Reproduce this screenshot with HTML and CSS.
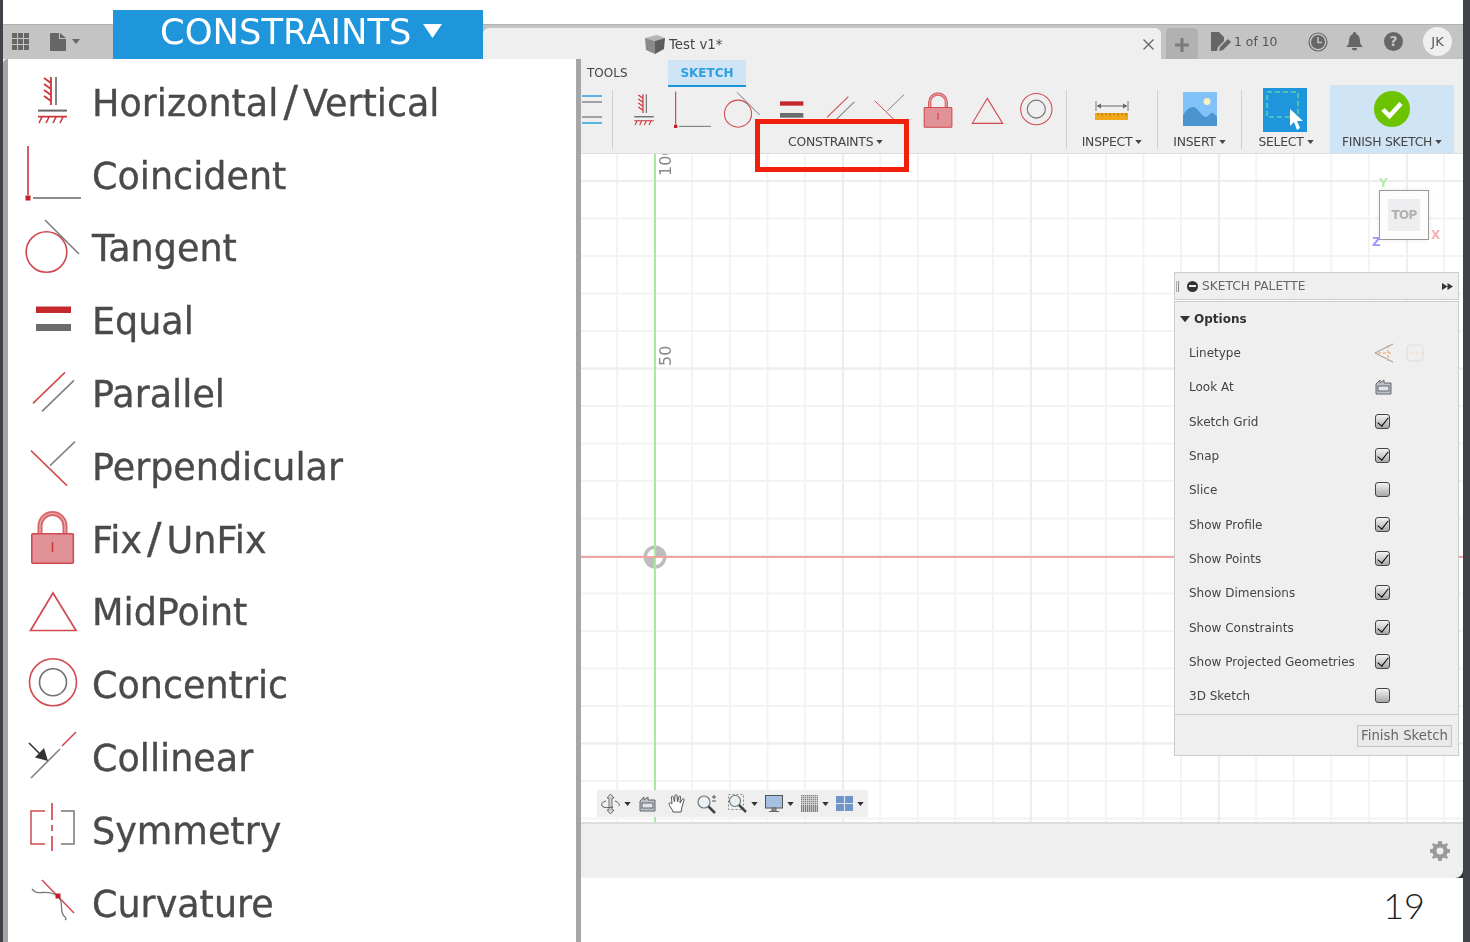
FILE: index.html
```html
<!DOCTYPE html>
<html lang="en">
<head>
    <meta charset="UTF-8">
    <title>Sketch constraints</title>
    <link rel="stylesheet" href="styles.css">
</head>
<body>
    <svg class="defs" width="0" height="0">
        <symbol id="i-hv" viewBox="0 0 60 60">
            <path d="M32 5V33" stroke="#666" stroke-width="1.6" fill="none"/>
            <path d="M20 6l7 5M20 12l7 5M20 18l7 5M20 24l7 5M27 5v28" stroke="#c9353a" stroke-width="1.8" fill="none"/>
            <path d="M14 38.6H43" stroke="#666" stroke-width="2" fill="none"/>
            <path d="M14 44.6H43M18 45l-3 6M25 45l-3 6M32 45l-3 6M39 45l-3 6" stroke="#c9353a" stroke-width="1.6" fill="none"/>
        </symbol>
        <symbol id="i-coincident" viewBox="0 0 60 60">
            <path d="M4 1V50" stroke="#c9353a" stroke-width="1.6" fill="none"/>
            <rect x="1.5" y="50.5" width="5" height="5" fill="#c41f24"/>
            <path d="M9 53H57" stroke="#666" stroke-width="1.4" fill="none"/>
        </symbol>
        <symbol id="i-tangent" viewBox="0 0 60 60">
            <circle cx="22.5" cy="34" r="20.3" stroke="#d04a50" stroke-width="1.6" fill="none"/>
            <path d="M21 2L55 36" stroke="#777" stroke-width="1.5" fill="none"/>
        </symbol>
        <symbol id="i-equal" viewBox="0 0 60 60">
            <rect x="12" y="15.5" width="35" height="6.5" fill="#c4282c"/>
            <rect x="12" y="33" width="35" height="7" fill="#6c6c6c"/>
        </symbol>
        <symbol id="i-parallel" viewBox="0 0 60 60">
            <path d="M9 39.4L41 8.4" stroke="#d04a50" stroke-width="1.6" fill="none"/>
            <path d="M18 47.4L50 16.4" stroke="#808080" stroke-width="1.6" fill="none"/>
        </symbol>
        <symbol id="i-perp" viewBox="0 0 60 60">
            <path d="M7 14.6L43 49.6" stroke="#d04a50" stroke-width="1.5" fill="none"/>
            <path d="M26 29.6L51 5.6" stroke="#808080" stroke-width="1.5" fill="none"/>
        </symbol>
        <symbol id="i-lock" viewBox="0 0 60 60">
            <path d="M16 25V17a12.5 12.5 0 0 1 25 0V25" stroke="#d6666c" stroke-width="5" fill="none"/>
            <path d="M16 25V17a12.5 12.5 0 0 1 25 0V25" stroke="#eeb4b6" stroke-width="1.2" fill="none"/>
            <rect x="7.8" y="24.8" width="41.5" height="29.5" rx="1" fill="#e19296" stroke="#d04a50" stroke-width="1.6"/>
            <path d="M28.5 33V43" stroke="#c9353a" stroke-width="1.5" fill="none"/>
        </symbol>
        <symbol id="i-mid" viewBox="0 0 60 60">
            <path d="M29 11L6.500 48.500H52Z" stroke="#d04a50" stroke-width="1.7" fill="none"/>
        </symbol>
        <symbol id="i-concentric" viewBox="0 0 60 60">
            <circle cx="29" cy="27.200" r="23.500" stroke="#d04a50" stroke-width="1.6" fill="none"/>
            <circle cx="29" cy="27.200" r="13.500" stroke="#707070" stroke-width="1.6" fill="none"/>
        </symbol>
        <symbol id="i-collinear" viewBox="0 0 60 60">
            <path d="M7 50L36 21" stroke="#808080" stroke-width="1.6" fill="none"/>
            <path d="M38 18L52 4" stroke="#d04a50" stroke-width="1.6" fill="none"/>
            <path d="M5 15L16 26" stroke="#333" stroke-width="1.6" fill="none"/>
            <path d="M24 33L11 29.500L20 20Z" fill="#333"/>
        </symbol>
        <symbol id="i-symmetry" viewBox="0 0 60 60">
            <path d="M21 11H7V44H21" stroke="#d04a50" stroke-width="1.5" fill="none"/>
            <path d="M37 11H50V44H37" stroke="#777" stroke-width="1.5" fill="none"/>
            <path d="M28 3V20M28 25V31M28 36V51" stroke="#c9353a" stroke-width="1.5" fill="none"/>
        </symbol>
        <symbol id="i-curvature" viewBox="0 0 60 60">
            <path d="M18 7L50 40" stroke="#d04a50" stroke-width="1.5" fill="none"/>
            <path d="M8 16C14 24 22 15 34 23C41 30 34 39 41 44Q43 46 41 47" stroke="#777" stroke-width="1.3" fill="none"/>
            <rect x="31.500" y="20.500" width="5" height="5" fill="#c41f24"/>
        </symbol>
        <symbol id="i-caret" viewBox="0 0 8 5">
            <path d="M0 0H8L4 5Z" fill="currentColor"/>
        </symbol>
    </svg>

    <div class="page">
        <div class="edge edge-left"></div>
        <div class="main">
            <div class="top-gap"></div>

            <div class="titlebar">
                <div class="bar-left">
                    <svg class="app-grid" width="17" height="17" viewBox="0 0 17 17"><path d="M0 0h5v5H0zM6 0h5v5H6zM12 0h5v5h-5zM0 6h5v5H0zM6 6h5v5H6zM12 6h5v5h-5zM0 12h5v5H0zM6 12h5v5H6zM12 12h5v5h-5z" fill="#666"/></svg>
                    <svg class="file-ico" width="16" height="18" viewBox="0 0 16 18"><path d="M0 1Q0 0 1 0H9V6H16V17Q16 18 15 18H1Q0 18 0 17ZM10 0L16 5H10Z" fill="#666"/></svg>
                    <svg class="bar-caret" width="8" height="5"><use href="#i-caret"/></svg>
                </div>
                <div class="doc-tab">
                    <div class="doc-title">
                        <svg width="20" height="19" viewBox="0 0 20 19"><path d="M0 3L12 0L20 3L10 6Z" fill="#b5b5b5"/><path d="M0 3L10 6V19L1 15Z" fill="#8a8a8a"/><path d="M10 6L20 3L19 14L10 19Z" fill="#5d5d5d"/></svg>
                        <span>Test v1*</span>
                    </div>
                    <svg class="tab-close" width="11" height="11" viewBox="0 0 11 11"><path d="M.5 .5L10.500 10.500M10.500 .5L.5 10.500" stroke="#666" stroke-width="1.300"/></svg>
                </div>
                <div class="new-tab"><svg width="16" height="16" viewBox="0 0 16 16"><path d="M6.500 1h3v5.500H15v3H9.500V15h-3V9.500H1v-3h5.500z" fill="#7a7a7a"/></svg></div>
                <div class="bar-right">
                    <svg class="ver-ico" width="20" height="20" viewBox="0 0 20 20"><path d="M0 0H8L13 5V9L7 15L6 19H0Z" fill="#666"/><path d="M9 15L17 7L20 10L12 18L8 19Z" fill="#666"/></svg>
                    <span class="ver-text">1 of 10</span>
                    <svg class="clock" width="20" height="20" viewBox="0 0 20 20"><circle cx="10" cy="10" r="9" fill="none" stroke="#666" stroke-width="1.200"/><circle cx="10" cy="10" r="7" fill="#666"/><path d="M10 5V10.500H14" stroke="#c4c4c4" stroke-width="1.500" fill="none"/></svg>
                    <svg class="bell" width="17" height="19" viewBox="0 0 17 19"><path d="M8.500 0a1.500 1.500 0 0 1 1.500 2C13 3 14 6 14 9C14 12 15 13 17 15H0C2 13 3 12 3 9C3 6 4 3 7 2A1.500 1.500 0 0 1 8.500 0ZM6 16H11A2.500 2.500 0 0 1 6 16Z" fill="#666"/></svg>
                    <span class="help">?</span>
                    <span class="avatar">JK</span>
                </div>
            </div>

            <div class="toolbar">
                <div class="tabs">
                    <span class="tab">TOOLS</span>
                    <span class="tab tab-active">SKETCH</span>
                </div>
                <div class="ribbon">
                    <div class="group group-stub">
                        <svg width="20" height="30" viewBox="0 0 20 30"><path d="M0 1H20M0 28H20" stroke="#2e9fe0" stroke-width="1.500"/><path d="M0 7H20M0 22H20" stroke="#888" stroke-width="1.500"/></svg>
                    </div>
                    <div class="sep"></div>
                    <div class="group group-constraints">
                        <div class="icon-row">
                            <svg class="tb"><use href="#i-hv"/></svg>
                            <svg class="tb tb-coin"><use href="#i-coincident"/></svg>
                            <svg class="tb"><use href="#i-tangent"/></svg>
                            <svg class="tb"><use href="#i-equal"/></svg>
                            <svg class="tb"><use href="#i-parallel"/></svg>
                            <svg class="tb"><use href="#i-perp"/></svg>
                            <svg class="tb"><use href="#i-lock"/></svg>
                            <svg class="tb"><use href="#i-mid"/></svg>
                            <svg class="tb"><use href="#i-concentric"/></svg>
                        </div>
                        <div class="tb-label">CONSTRAINTS<svg class="lab-caret" width="7" height="4"><use href="#i-caret"/></svg></div>
                    </div>
                    <div class="sep"></div>
                    <div class="group group-inspect">
                        <svg class="big ruler" width="34" height="20" viewBox="0 0 34 20">
                            <path d="M1 1V11M33 1V11" stroke="#777" stroke-width="1"/>
                            <path d="M3 6H31" stroke="#666" stroke-width="1"/>
                            <path d="M1.500 6L6 3.500V8.500ZM32.500 6L28 3.500V8.500Z" fill="#666"/>
                            <rect x="0" y="13" width="33" height="7" fill="#f0a818"/>
                            <path d="M3 13v2M7 13v3M11 13v2M15 13v3M19 13v2M23 13v3M27 13v2M31 13v3" stroke="#a87410" stroke-width="1"/>
                        </svg>
                        <div class="tb-label">INSPECT<svg class="lab-caret" width="7" height="4"><use href="#i-caret"/></svg></div>
                    </div>
                    <div class="sep"></div>
                    <div class="group group-insert">
                        <svg class="big picture" width="34" height="34" viewBox="0 0 34 34">
                            <rect width="34" height="34" fill="#82c2fb"/>
                            <circle cx="24" cy="9.500" r="3.500" fill="#f6f2bf"/>
                            <path d="M0 23C5 15 10 13 14 17C18 21 20 25 23 25C26 25 27 20 30 21C32 22 33 24 34 25V34H0Z" fill="#4a94cf"/>
                        </svg>
                        <div class="tb-label">INSERT<svg class="lab-caret" width="7" height="4"><use href="#i-caret"/></svg></div>
                    </div>
                    <div class="sep"></div>
                    <div class="group group-select">
                        <svg class="big select" width="44" height="44" viewBox="0 0 44 44">
                            <rect width="44" height="44" fill="#1f96dc"/>
                            <rect x="4" y="4" width="31" height="25" fill="none" stroke="#5fd0a4" stroke-width="1.500" stroke-dasharray="5 3"/>
                            <path d="M27 21L27 38L31 34L34 42L37 40L34 33L40 33Z" fill="#fff"/>
                        </svg>
                        <div class="tb-label">SELECT<svg class="lab-caret" width="7" height="4"><use href="#i-caret"/></svg></div>
                    </div>
                    <div class="group group-finish">
                        <svg class="big finish" width="36" height="36" viewBox="0 0 36 36">
                            <circle cx="18" cy="18" r="18" fill="#6cc400"/>
                            <path d="M9 18.500L15.500 25L27 12.500" stroke="#fff" stroke-width="4.500" fill="none"/>
                        </svg>
                        <div class="tb-label">FINISH SKETCH<svg class="lab-caret" width="7" height="4"><use href="#i-caret"/></svg></div>
                    </div>
                </div>
            </div>

            <div class="canvas">
                <svg class="origin" width="24" height="24" viewBox="0 0 24 24">
                    <circle cx="12" cy="12" r="11.500" fill="#bdbdbd"/>
                    <path d="M12 12V4A8 8 0 0 0 4 12ZM12 12V20A8 8 0 0 0 20 12Z" fill="#fff"/>
                </svg>
                <div class="axis-y"></div>
                <div class="axis-x"></div>
                <span class="dim dim-100">100</span>
                <span class="dim dim-50">50</span>

                <div class="navcube">
                    <span class="axis-tag tag-y">Y</span>
                    <div class="cube-face"><span class="cube-top">TOP</span></div>
                    <span class="axis-tag tag-x">X</span>
                    <span class="axis-tag tag-z">Z</span>
                </div>

                <div class="palette">
                    <div class="pal-head">
                        <span class="grip"></span>
                        <span class="minus"></span>
                        <span class="pal-title">SKETCH PALETTE</span>
                        <svg class="ff" width="11" height="7" viewBox="0 0 11 7"><path d="M0 0L5.500 3.500L0 7ZM5.500 0L11 3.500L5.500 7Z" fill="#333"/></svg>
                    </div>
                    <div class="pal-body">
                        <div class="opt-head"><svg class="opt-caret" width="10" height="8"><use href="#i-caret"/></svg>Options</div>
                        <div class="row"><span class="row-label">Linetype</span>
                            <svg width="20" height="20" viewBox="0 0 20 20"><path d="M19 1L1 10L19 19" stroke="#999" stroke-width="1" fill="none"/><path d="M4 10H19M14 2V18" stroke="#f0a060" stroke-width="1" stroke-dasharray="3 2" fill="none"/></svg>
                            <svg class="ghost" width="18" height="18" viewBox="0 0 18 18"><path d="M5 1H14Q17 1 17 4V14Q17 17 14 17H5Q1 17 1 14V4Q1 1 5 1Z" stroke="#ddd" fill="none"/><path d="M0 9H18" stroke="#f5d8c0" stroke-dasharray="3 2"/></svg>
                        </div>
                        <div class="row"><span class="row-label">Look At</span>
                            <svg class="lookat" width="17" height="16" viewBox="0 0 17 16"><path d="M1 5L5 1V4L9 1V4H16V15H1Z" fill="#b9c2cc" stroke="#666" stroke-width="1"/><rect x="3" y="7" width="11" height="5" fill="#dfe5ea" stroke="#666" stroke-width="1"/></svg>
                        </div>
                        <div class="row"><span class="row-label">Sketch Grid</span><span class="check on"></span></div>
                        <div class="row"><span class="row-label">Snap</span><span class="check on"></span></div>
                        <div class="row"><span class="row-label">Slice</span><span class="check"></span></div>
                        <div class="row"><span class="row-label">Show Profile</span><span class="check on"></span></div>
                        <div class="row"><span class="row-label">Show Points</span><span class="check on"></span></div>
                        <div class="row"><span class="row-label">Show Dimensions</span><span class="check on"></span></div>
                        <div class="row"><span class="row-label">Show Constraints</span><span class="check on"></span></div>
                        <div class="row"><span class="row-label">Show Projected Geometries</span><span class="check on"></span></div>
                        <div class="row"><span class="row-label">3D Sketch</span><span class="check"></span></div>
                    </div>
                    <div class="pal-foot"><span class="pal-btn">Finish Sketch</span></div>
                </div>

                <div class="nav-tools">
                    <svg class="n-orbit" width="19" height="20" viewBox="0 0 19 20"><path d="M9.500 0L13 4H11V16H13L9.500 20L6 16H8V4H6Z" fill="#d5dadf" stroke="#555" stroke-width=".8"/><path d="M5 7C1 8 0 10 1 12C3 14 7 14 12 13M14 7C17 8 19 10 18 12" stroke="#555" stroke-width="1" fill="none"/></svg>
                    <svg class="nc" width="7" height="4"><use href="#i-caret"/></svg>
                    <svg class="n-look" width="17" height="16" viewBox="0 0 17 16"><path d="M1 5L5 1V4L9 1V4H16V15H1Z" fill="#b9c2cc" stroke="#666" stroke-width="1"/><rect x="3" y="7" width="11" height="5" fill="#dfe5ea" stroke="#666" stroke-width="1"/></svg>
                    <svg class="n-hand" width="18" height="19" viewBox="0 0 18 19"><path d="M5 18C4 14 1 12 1 10C1 8 3 9 4 10L3.500 3C3.500 2 5 2 5.500 3L6.500 8L7 1.500C7 .5 9 .5 9 1.500L9.500 8L11 2.500C11.500 1.500 13 2 12.500 3L12 9L14.500 5C15.500 4 16.500 5 16 6L14 13L13 18Z" fill="#fff" stroke="#555" stroke-width="1"/></svg>
                    <svg class="n-zoom" width="20" height="20" viewBox="0 0 20 20"><circle cx="7" cy="8" r="6" fill="#e6f2f5" stroke="#777" stroke-width="1.200"/><path d="M11.500 12.500L18 19" stroke="#444" stroke-width="2.500"/><path d="M15 3H19M17 1V5M15 7H19" stroke="#555" stroke-width="1"/></svg>
                    <svg class="n-window" width="19" height="19" viewBox="0 0 19 19"><rect x=".5" y=".5" width="15" height="15" fill="none" stroke="#888" stroke-width="1" stroke-dasharray="2 2"/><circle cx="7" cy="7" r="5.500" fill="#e6f2f5" stroke="#777" stroke-width="1.200"/><path d="M11 11L18 18" stroke="#444" stroke-width="2.500"/></svg>
                    <svg class="nc" width="7" height="4"><use href="#i-caret"/></svg>
                    <svg class="n-display" width="18" height="18" viewBox="0 0 18 18"><rect x=".5" y=".5" width="17" height="12.500" fill="#a5c0e0" stroke="#555" stroke-width="1"/><path d="M7 13H11V16H7ZM4 16.500H14" stroke="#666" fill="#999"/></svg>
                    <svg class="nc" width="7" height="4"><use href="#i-caret"/></svg>
                    <svg class="n-grid" width="17" height="17" viewBox="0 0 17 17"><rect width="17" height="17" fill="#808080"/><path d="M1.500 0V17M3.500 0V17M5.500 0V17M7.500 0V17M9.500 0V17M11.500 0V17M13.500 0V17M15.500 0V17M0 1.500H17M0 3.500H17M0 5.500H17M0 7.500H17M0 9.500H17" stroke="#d8d8d8" stroke-width=".8"/></svg>
                    <svg class="nc" width="7" height="4"><use href="#i-caret"/></svg>
                    <svg class="n-views" width="17" height="15" viewBox="0 0 17 15"><rect width="17" height="15" fill="#6f95c8"/><path d="M8.500 0V15M0 7.500H17" stroke="#dbe5f1" stroke-width="1.200"/></svg>
                    <svg class="nc" width="7" height="4"><use href="#i-caret"/></svg>
                </div>
            </div>

            <div class="foot">
                <div class="foot-bar">
                    <svg width="20" height="20" viewBox="0 0 20 20"><path d="M8.300 0H11.700L12.200 2.700L14.200 3.500L16.500 2L18 3.500L16.500 5.800L17.300 7.800L20 8.300V11.700L17.300 12.200L16.500 14.200L18 16.500L16.500 18L14.200 16.500L12.200 17.300L11.700 20H8.300L7.800 17.300L5.800 16.500L3.500 18L2 16.500L3.500 14.200L2.700 12.200L0 11.700V8.300L2.700 7.800L3.500 5.800L2 3.500L3.500 2L5.800 3.500L7.800 2.700ZM10 6.500A3.500 3.500 0 1 0 10 13.500A3.500 3.500 0 1 0 10 6.500Z" fill="#9a9a9a" fill-rule="evenodd"/></svg>
                </div>
            </div>
            <div class="page-no">19</div>
        </div>
        <div class="edge edge-right"></div>
    </div>

    <div class="menu">
        <div class="menu-row"><svg class="m-ico"><use href="#i-hv"/></svg><span class="m-text">Horizontal<span class="slash">/</span>Vertical</span></div>
        <div class="menu-row"><svg class="m-ico"><use href="#i-coincident"/></svg><span class="m-text">Coincident</span></div>
        <div class="menu-row"><svg class="m-ico"><use href="#i-tangent"/></svg><span class="m-text">Tangent</span></div>
        <div class="menu-row"><svg class="m-ico"><use href="#i-equal"/></svg><span class="m-text">Equal</span></div>
        <div class="menu-row"><svg class="m-ico"><use href="#i-parallel"/></svg><span class="m-text">Parallel</span></div>
        <div class="menu-row"><svg class="m-ico"><use href="#i-perp"/></svg><span class="m-text">Perpendicular</span></div>
        <div class="menu-row"><svg class="m-ico"><use href="#i-lock"/></svg><span class="m-text">Fix<span class="slash">/</span>UnFix</span></div>
        <div class="menu-row"><svg class="m-ico"><use href="#i-mid"/></svg><span class="m-text">MidPoint</span></div>
        <div class="menu-row"><svg class="m-ico"><use href="#i-concentric"/></svg><span class="m-text">Concentric</span></div>
        <div class="menu-row"><svg class="m-ico"><use href="#i-collinear"/></svg><span class="m-text">Collinear</span></div>
        <div class="menu-row"><svg class="m-ico"><use href="#i-symmetry"/></svg><span class="m-text">Symmetry</span></div>
        <div class="menu-row"><svg class="m-ico"><use href="#i-curvature"/></svg><span class="m-text">Curvature</span></div>
    </div>

    <div class="banner">
        <span>CONSTRAINTS</span>
        <svg width="19" height="14" viewBox="0 0 8 5" preserveAspectRatio="none"><use href="#i-caret"/></svg>
    </div>

    <div class="callout"></div>
</body>
</html>
```

FILE: styles.css
```css
* {
    box-sizing: border-box;
}
body {
    margin: 0;
    width: 1470px;
    height: 942px;
    position: relative;
    overflow: hidden;
    background: #fff;
    font-family: "DejaVu Sans", "Noto Sans", sans-serif;
    color: #444;
}
svg {
    display: block;
    flex: none;
}
.defs {
    position: absolute;
}
.page {
    display: flex;
    height: 942px;
}
.edge {
    background: #3f4246;
    flex: none;
}
.edge-left {
    width: 3px;
}
.edge-right {
    width: 7px;
}
.main {
    flex: 1;
    display: flex;
    flex-direction: column;
    min-width: 0;
}
.top-gap {
    height: 24px;
    flex: none;
}

/* title bar */
.titlebar {
    height: 35px;
    flex: none;
    display: flex;
    background: #c4c4c4;
    border-top: 1px solid #b0b0b0;
    padding-top: 3px;
    color: #666;
    filter: blur(.3px);
}
.bar-left {
    width: 480px;
    display: flex;
    align-items: flex-start;
    padding: 5px 0 0 9px;
    flex: none;
}
.file-ico {
    margin-left: 21px;
}
.bar-caret {
    margin: 6px 0 0 6px;
    color: #666;
}
.doc-tab {
    width: 678px;
    flex: none;
    background: #efefef;
    border-radius: 6px 6px 0 0;
    display: flex;
    align-items: center;
    position: relative;
}
.doc-title {
    display: flex;
    align-items: center;
    gap: 4px;
    margin-left: 162px;
    padding-top: 1px;
    font-size: 13.3px;
    color: #444;
}
.tab-close {
    position: absolute;
    right: 7px;
    top: 11px;
}
.new-tab {
    width: 32px;
    flex: none;
    margin-left: 5px;
    background: #b1b1b1;
    border-radius: 5px 5px 0 0;
    display: flex;
    align-items: center;
    justify-content: center;
    padding-top: 2px;
}
.bar-right {
    display: flex;
    align-items: center;
    flex: 1;
    padding-bottom: 4px;
}
.ver-ico {
    margin-left: 13px;
}
.ver-text {
    font-size: 12.4px;
    margin-left: 3px;
    width: 44px;
    white-space: nowrap;
    color: #555;
}
.clock {
    margin-left: 30px;
}
.bell {
    margin-left: 18px;
}
.help {
    width: 19px;
    height: 19px;
    margin-left: 21px;
    border-radius: 50%;
    background: #666;
    color: #c4c4c4;
    font-size: 14px;
    font-weight: bold;
    text-align: center;
    line-height: 19px;
}
.avatar {
    width: 29px;
    height: 29px;
    margin-left: 20px;
    border-radius: 50%;
    background: #efefef;
    color: #555;
    font-size: 13px;
    text-align: center;
    line-height: 29px;
}

/* toolbar */
.toolbar {
    height: 95px;
    flex: none;
    background: #efefef;
    border-bottom: 1px solid #ddd;
    padding-left: 578px;
    filter: blur(.3px);
}
.tabs {
    height: 28px;
    display: flex;
    padding-top: 1px;
}
.tab {
    font-size: 12px;
    line-height: 26px;
    padding-left: 6px;
    width: 87px;
}
.tab-active {
    width: 78px;
    padding: 0;
    text-align: center;
    background: #cfe5f5;
    border-bottom: 2px solid #1f96dc;
    color: #2e9fe0;
    font-weight: bold;
}
.ribbon {
    display: flex;
    height: 66px;
}
.group {
    display: flex;
    flex-direction: column;
    align-items: center;
    justify-content: flex-end;
    position: relative;
    flex: none;
}
.sep {
    width: 1px;
    flex: none;
    background: #cfcfcf;
    margin: 3px 0 4px;
}
.group-stub {
    width: 31px;
    justify-content: flex-start;
    align-items: flex-start;
    padding: 8px 0 0 1px;
}
.group-constraints {
    width: 453px;
    align-items: flex-start;
}
.icon-row {
    display: flex;
    gap: 9px;
    padding: 0 0 2px 12px;
    position: absolute;
    top: 4px;
    left: 0;
}
.tb {
    width: 40px;
    height: 40px;
}
.tb-coin {
    margin: 0 1px 0 -1px;
}
.group-constraints .tb-label {
    margin-left: 175px;
}
.tb-label {
    height: 22px;
    line-height: 18px;
    font-size: 12.4px;
    letter-spacing: -.25px;
    color: #444;
    display: flex;
    align-items: center;
    gap: 3px;
    white-space: nowrap;
}
.lab-caret {
    color: #444;
}
.big {
    position: absolute;
}
.group-inspect {
    width: 90px;
}
.ruler {
    top: 13px;
    left: 28px;
}
.group-insert {
    width: 83px;
}
.picture {
    top: 5px;
    left: 25px;
}
.group-select {
    width: 88px;
}
.select {
    top: 1px;
    left: 21px;
}
.group-finish {
    width: 124px;
    height: 68px;
    margin-top: -2px;
    background: #cfe5f5;
}
.finish {
    top: 6px;
    left: 44px;
}

/* canvas */
.canvas {
    height: 668px;
    flex: none;
    position: relative;
    overflow: hidden;
    background-color: #fff;
    background-image:
        linear-gradient(to right, #ededed 2px, transparent 2px),
        linear-gradient(to bottom, #ededed 2px, transparent 2px),
        linear-gradient(to right, #f3f3f3 2px, transparent 2px),
        linear-gradient(to bottom, #f3f3f3 2px, transparent 2px);
    background-size: 188px 187.5px, 188px 187.5px, 37.6px 37.5px, 37.6px 37.5px;
    background-position: 87px 26px, 87px 26px, 11.6px 26px, 11.6px 26px;
    filter: blur(.3px);
}
.axis-y {
    position: absolute;
    left: 651px;
    top: 0;
    bottom: 0;
    width: 2px;
    background: #a9e8a0;
}
.axis-x {
    position: absolute;
    left: 0;
    right: 0;
    top: 402px;
    height: 1.5px;
    background: #f2a4a4;
}
.origin {
    position: absolute;
    left: 640px;
    top: 391px;
}
.dim {
    position: absolute;
    left: 653px;
    font-size: 16px;
    color: #888;
    transform: rotate(-90deg);
    transform-origin: left top;
    line-height: 20px;
    white-space: nowrap;
}
.dim-100 {
    top: 22px;
}
.dim-50 {
    top: 212px;
}

/* nav cube */
.navcube {
    position: absolute;
    left: 1376px;
    top: 36px;
    width: 50px;
    height: 50px;
}
.cube-face {
    width: 50px;
    height: 50px;
    background: #fdfdfd;
    border: 1px solid #999;
    box-shadow: 0 0 6px rgba(0, 0, 0, .08);
    display: flex;
    align-items: center;
    justify-content: center;
}
.cube-top {
    width: 32px;
    height: 32px;
    background: #eeeef0;
    color: #b0b0b0;
    font-size: 12px;
    font-weight: bold;
    line-height: 32px;
    text-align: center;
    letter-spacing: -.8px;
}
.axis-tag {
    position: absolute;
    font-size: 12px;
    font-weight: bold;
}
.tag-y {
    left: 0;
    top: -14px;
    color: #b5ecae;
}
.tag-x {
    left: 52px;
    top: 38px;
    color: #f7b0b0;
}
.tag-z {
    left: -7px;
    top: 45px;
    color: #9a9af6;
}

/* sketch palette */
.palette {
    position: absolute;
    right: 4px;
    top: 118px;
    width: 285px;
    font-size: 12px;
    color: #444;
}
.pal-head {
    height: 28px;
    background: #efefef;
    border: 1px solid #ccc;
    display: flex;
    align-items: center;
    color: #666;
}
.grip {
    width: 3px;
    height: 11px;
    margin-left: 1px;
    border-left: 1px solid #aaa;
    border-right: 1px solid #888;
}
.minus {
    width: 11px;
    height: 11px;
    margin-left: 8px;
    border-radius: 50%;
    background: linear-gradient(#eee, #eee) center / 7px 2px no-repeat, #333;
}
.pal-title {
    margin-left: 4px;
    flex: 1;
    font-size: 12.2px;
}
.ff {
    margin-right: 5px;
}
.pal-body {
    margin-top: 1px;
    background: #efefef;
    border: 1px solid #ccc;
    border-width: 1px 1px 0;
    padding-bottom: 1px;
}
.opt-head {
    height: 34px;
    display: flex;
    align-items: center;
    padding-left: 5px;
    gap: 4px;
    font-weight: bold;
    color: #333;
}
.opt-caret {
    color: #333;
}
.row {
    height: 34.3px;
    display: flex;
    align-items: center;
    padding-left: 14px;
}
.row-label {
    width: 185px;
    white-space: nowrap;
    flex: none;
}
.ghost {
    margin-left: 12px;
}
.lookat {
    margin: -1px 0 0 1px;
}
.check {
    width: 15px;
    height: 15px;
    margin: -1px 0 0 1px;
    border: 1px solid #444;
    border-radius: 3px;
    background: linear-gradient(#f4f4f4, #a8a8a8);
    position: relative;
}
.check.on::after {
    content: "";
    position: absolute;
    left: 4px;
    top: 0;
    width: 5px;
    height: 10px;
    border: solid #000;
    border-width: 0 1.7px 1.7px 0;
    transform: rotate(38deg);
}
.pal-foot {
    height: 42px;
    background: #efefef;
    border: 1px solid #ccc;
    display: flex;
    justify-content: flex-end;
    padding: 10px 6px 0 0;
}
.pal-btn {
    width: 95px;
    height: 22px;
    background: #e9e9e9;
    border: 1px solid #c4c4c4;
    font-size: 13.3px;
    color: #666;
    text-align: center;
    line-height: 20px;
    white-space: nowrap;
}

/* nav tools */
.nav-tools {
    position: absolute;
    left: 594px;
    top: 636px;
    width: 271px;
    height: 27px;
    background: #efefef;
    display: flex;
    align-items: center;
    padding-left: 4px;
    color: #333;
}
.nc {
    margin-left: 4px;
}
.n-look {
    margin-left: 8px;
}
.n-hand {
    margin-left: 12px;
}
.n-zoom {
    margin-left: 11px;
}
.n-window {
    margin-left: 11px;
}
.n-display {
    margin-left: 7px;
}
.n-grid {
    margin-left: 7px;
}
.n-views {
    margin-left: 7px;
}

/* footer */
.foot {
    height: 56px;
    flex: none;
    background: #2f3236;
}
.foot-bar {
    height: 56px;
    background: #efefef;
    border-top: 2px solid #ddd;
    border-bottom-right-radius: 8px;
    display: flex;
    justify-content: flex-end;
    align-items: center;
    padding-right: 13px;
}
.page-no {
    flex: 1;
    text-align: right;
    padding: 5px 38px 0 0;
    font-family: Lato, "Open Sans", sans-serif;
    font-weight: 300;
    font-size: 36px;
    line-height: 44px;
    color: #222;
}

/* constraints menu, drawn over the app */
.menu {
    position: absolute;
    left: 3px;
    top: 59px;
    bottom: 0;
    width: 578px;
    background: #fff;
    border-left: 5px solid #a6a6a6;
    border-right: 5px solid #a6a6a6;
    border-top-left-radius: 5px;
    padding-top: 7px;
    color: #4a4a4a;
    font-size: 36.5px;
    filter: blur(.4px);
}
.menu-row {
    height: 72.8px;
    display: flex;
    align-items: center;
    padding-left: 16px;
    white-space: nowrap;
}
.m-ico {
    width: 60px;
    height: 60px;
    margin-right: 8px;
}
.m-text {
    margin-top: 2px;
    -webkit-text-stroke: .35px #4a4a4a;
}
.slash {
    margin: 0 5px;
    font-size: 43px;
    line-height: 0;
}

.banner {
    position: absolute;
    left: 113px;
    top: 10px;
    width: 370px;
    height: 49px;
    background: #1f96dc;
    color: #fff;
    font-size: 35.4px;
    display: flex;
    align-items: center;
    padding: 0 0 7px 47px;
    gap: 12px;
    white-space: nowrap;
    filter: blur(.4px);
}

.callout {
    position: absolute;
    left: 755px;
    top: 119px;
    width: 154px;
    height: 53px;
    border: 5px solid #f0200c;
}
```
